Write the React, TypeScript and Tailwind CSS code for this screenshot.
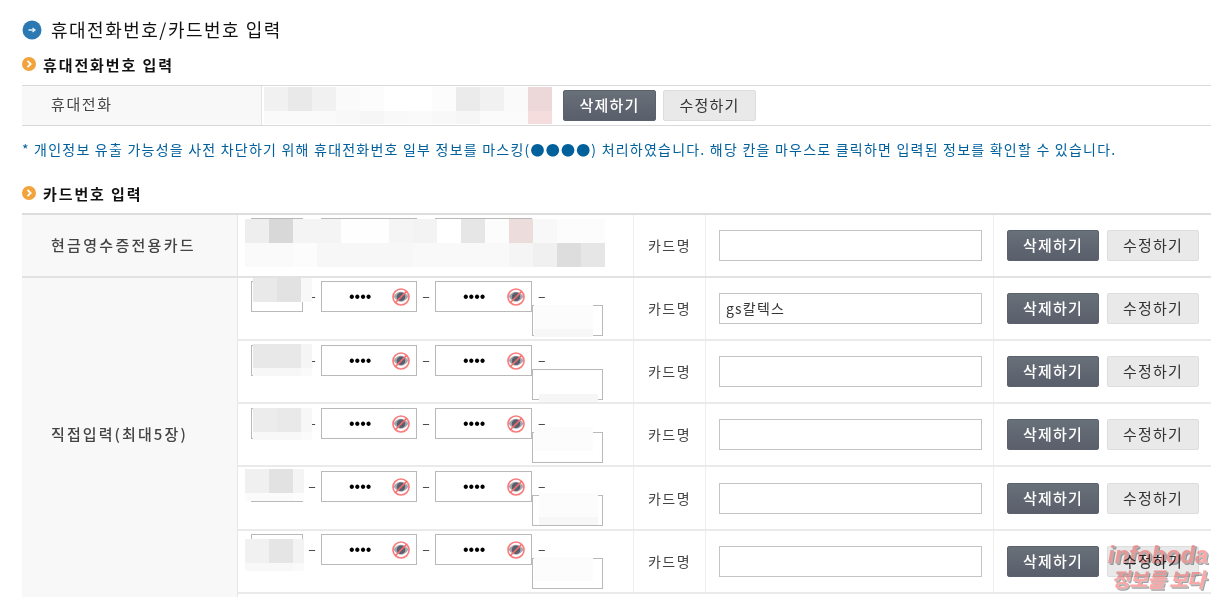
const FONT = "font-['Noto_Sans_CJK_KR','Noto_Sans',sans-serif]";

type Row = { height: string; top: string; value?: string; first: string[][]; last: string[][]; firstPos: string; lastPos: string };

function Mosaic({ rows, className }: { rows: string[][]; className: string }) {
  return (
    <div className={`pointer-events-none absolute flex flex-col overflow-hidden ${className}`}>
      {rows.map((cells, i) => (
        <div key={i} className="flex">
          {cells.map((c, j) => (
            <div key={j} className={`h-6 w-6 shrink-0 ${c}`} />
          ))}
        </div>
      ))}
    </div>
  );
}

function NoEye() {
  return (
    <svg width="18" height="18" viewBox="0 0 18 18" className="shrink-0">
      <path d="M1.500 8.500C4 5 6.500 3.800 9 3.800s5 1.200 7.500 4.700C14 12.500 11.500 13.700 9 13.700S4 12.500 1.500 8.500z" fill="#a5a7b0" />
      <circle cx="9" cy="8.800" r="4.300" fill="#5a5f6e" />
      <circle cx="9" cy="9" r="8" fill="none" stroke="#fb7c7c" strokeWidth="1.700" />
      <path d="M3.500 14.500L14.500 3.500" stroke="#f76a6a" strokeWidth="1.600" />
    </svg>
  );
}

function MaskedInput({ className }: { className: string }) {
  return (
    <div className={`flex h-[31px] items-center border border-[#b9b9b9] bg-white ${className}`}>
      <span className="ml-[27px] font-['Liberation_Sans',sans-serif] text-[16px] leading-none text-black">••••</span>
      <span className="ml-auto mr-[6px] flex"><NoEye /></span>
    </div>
  );
}

function Btn({ dark, label, wide }: { dark?: boolean; label: string; wide?: boolean }) {
  return (
    <button
      className={`h-[31px] ${wide ? "w-[93px]" : "w-[92px]"} rounded-[2px] border pb-[2px] text-[15px] leading-none tracking-[1.2px] ${
        dark
          ? "border-[#5c626d] bg-gradient-to-b from-[#687079] to-[#5a5f6b] font-medium text-white"
          : "border-[#dddddd] bg-[#e9e9e9] text-[#333333]"
      }`}
    >
      {label}
    </button>
  );
}

function Heading({ label }: { label: string }) {
  return (
    <div className="flex h-5 items-center">
      <svg width="14" height="14" viewBox="0 0 14 14" className="shrink-0 -translate-y-[1px]">
        <circle cx="7" cy="7" r="7" fill="#f2a33a" />
        <path d="M5.500 3.800L8.700 7L5.500 10.200" fill="none" stroke="#fff" strokeWidth="1.800" />
      </svg>
      <h3 className="ml-[7px] text-[15px] font-bold tracking-[1.9px] text-[#111111]">{label}</h3>
    </div>
  );
}

const rows: Row[] = [
  {
    height: "h-[63px]", top: "mt-[3px]", value: "gs칼텍스",
    first: [["bg-[#e9e9e9]", "bg-[#e2e2e2]", "bg-[#f8f8f8]"]],
    last: [["bg-[#fcfcfc]", "bg-[#fcfcfc]", "bg-[#fcfcfc]"], ["bg-[#f7f7f7]", "bg-[#f7f7f7]", "bg-[#f7f7f7]"]],
    firstPos: "left-[15px] top-0 w-[59px]", lastPos: "left-[296px] top-[27px] w-[59px] h-[32px]",
  },
  {
    height: "h-[63px]", top: "mt-[4px]",
    first: [["bg-[#e8e8e8]", "bg-[#e8e8e8]", "bg-[#f5f5f5]"], ["bg-[#f7f7f7]", "bg-[#f7f7f7]", "bg-[#fafafa]"]],
    last: [["bg-[#f6f6f6]", "bg-[#f6f6f6]", "bg-[#f6f6f6]"]],
    firstPos: "left-[15px] top-[3px] w-[59px] h-[32px]", lastPos: "left-[301px] top-[53px] w-[59px] h-2",
  },
  {
    height: "h-[63px]", top: "mt-[4px]",
    first: [["bg-[#ececec]", "bg-[#e9e9e9]", "bg-[#f7f7f7]"], ["bg-[#f8f8f8]", "bg-[#f8f8f8]", "bg-[#fbfbfb]"]],
    last: [["bg-[#fcfcfc]", "bg-[#fcfcfc]", "bg-[#fcfcfc]"]],
    firstPos: "left-[15px] top-[4px] w-[59px] h-[32px]", lastPos: "left-[296px] top-[23px] w-[59px]",
  },
  {
    height: "h-[64px]", top: "mt-[4px]",
    first: [["bg-[#f0f0f0]", "bg-[#e2e2e2]", "bg-[#f4f4f4]"], ["bg-[#fbfbfb]", "bg-[#fbfbfb]", "bg-[#fdfdfd]"]],
    last: [["bg-[#fcfcfc]", "bg-[#fcfcfc]", "bg-[#fcfcfc]"], ["bg-[#f7f7f7]", "bg-[#f7f7f7]", "bg-[#f7f7f7]"]],
    firstPos: "left-[7px] top-[2px] w-[59px] h-[32px]", lastPos: "left-[301px] top-[26px] w-[59px] h-[32px]",
  },
  {
    height: "h-[63px]", top: "mt-[3px]",
    first: [["bg-[#f1f1f1]", "bg-[#e5e5e5]", "bg-[#f3f3f3]"], ["bg-[#f8f8f8]", "bg-[#f8f8f8]", "bg-[#fafafa]"]],
    last: [["bg-[#fcfcfc]", "bg-[#fcfcfc]", "bg-[#fcfcfc]"]],
    firstPos: "left-[7px] top-[8px] w-[59px] h-[32px]", lastPos: "left-[296px] top-[26px] w-[59px]",
  },
];

function CardNameCells({ value }: { value?: string }) {
  return (
    <>
      <div className="flex items-center justify-center border-l border-[#eeeeee] text-[14px] tracking-[1.5px] text-[#444444]">카드명</div>
      <div className="flex items-center border-l border-[#eeeeee] pl-[13px]">
        <div className="flex h-[31px] w-[263px] items-center border border-[#c4c4c4] bg-white pl-[6px] text-[14px] tracking-[1.2px] text-[#333333]">
          {value}
        </div>
      </div>
      <div className="flex items-center gap-2 border-l border-[#eeeeee] pl-[13px]">
        <Btn dark label="삭제하기" />
        <Btn label="수정하기" />
      </div>
    </>
  );
}

export default function App() {
  return (
    <div className={`relative h-[597px] w-[1211px] overflow-hidden bg-white pl-[22px] ${FONT}`}>
      {/* page title */}
      <div className="flex h-[55px] items-center pt-[5px]">
        <svg width="20" height="20" viewBox="0 0 20 20" className="shrink-0">
          <circle cx="10" cy="10" r="9.500" fill="#2b78b3" />
          <path d="M6.500 10H13M10.500 8L13 10L10.500 12" fill="none" stroke="#dfeefa" strokeWidth="1.300" />
        </svg>
        <h2 className="ml-[9px] -translate-y-[1px] text-[18px] tracking-[1.5px] text-[#111111]">휴대전화번호/카드번호 입력</h2>
      </div>

      <Heading label="휴대전화번호 입력" />

      {/* phone table */}
      <div className="relative mt-[10px] flex h-[41px] border-y border-[#d9d9d9]">
        <div className="flex w-[240px] items-center border-r border-[#e4e4e4] bg-[#f8f8f8] pb-[2px] pl-[29px] text-[15px] tracking-[1.6px] text-[#444444]">휴대전화</div>
        <div className="flex items-center gap-[7px] pl-[301px]">
          <Btn dark wide label="삭제하기" />
          <Btn wide label="수정하기" />
        </div>
        <Mosaic
          className="left-[242px] top-[1px] h-[37px]"
          rows={[
            ["bg-[#f1f1f1]", "bg-[#e9e9e9]", "bg-[#f1f1f1]", "bg-[#fafafa]", "bg-[#fcfcfc]", "bg-white", "bg-white", "bg-[#fcfcfc]", "bg-[#ebebeb]", "bg-[#f1f1f1]", "bg-[#fafafa]", "bg-[#ecd8d8]"],
            ["bg-[#fafafa]", "bg-[#fafafa]", "bg-[#fafafa]", "bg-[#f8f8f8]", "bg-[#f6f6f6]", "bg-[#f9f9f9]", "bg-[#fafafa]", "bg-[#f8f8f8]", "bg-[#f6f6f6]", "bg-[#fbfbfb]", "bg-[#fbfbfb]", "bg-[#f5dddd]"],
          ]}
        />
      </div>

      <p className="mt-[13px] text-[14px] leading-[20px] tracking-[1.22px] text-[#00609c]">
        * 개인정보 유출 가능성을 사전 차단하기 위해 휴대전화번호 일부 정보를 마스킹(●●●●) 처리하였습니다. 해당 칸을 마우스로 클릭하면 입력된 정보를 확인할 수 있습니다.
      </p>

      <div className="mt-[25px]">
        <Heading label="카드번호 입력" />
      </div>

      {/* card table */}
      <div className="mt-[9px] border-t-2 border-[#dddddd]">
        <div className="relative grid h-[63px] grid-cols-[216px_395px_72px_288px_218px] border-b-2 border-[#e2e2e2]">
          <div className="flex items-center border-r border-[#e6e6e6] bg-[#f8f8f8] pl-[29px] text-[15px] font-medium tracking-[2.3px] text-[#444444]">현금영수증전용카드</div>
          <div className="relative">
            <div className="absolute left-[13px] top-[3px] h-[31px] w-[52px] border border-[#b9b9b9]" />
            <div className="absolute left-[83px] top-[3px] h-[31px] w-[96px] border border-[#b9b9b9]" />
            <div className="absolute left-[197px] top-[3px] h-[31px] w-[97px] border border-[#b9b9b9]" />
            <Mosaic
              className="left-[7px] top-[4px]"
              rows={[
                ["bg-[#eeeeee]", "bg-[#d8d8d8]", "bg-[#f4f4f4]", "bg-[#f4f4f4]", "bg-[#fefefe]", "bg-[#fefefe]", "bg-[#f5f5f5]", "bg-[#f3f3f3]", "bg-white", "bg-[#e6e6e6]", "bg-[#fcfcfc]", "bg-[#ecdcdc]", "bg-[#f8f8f8]", "bg-[#fcfcfc]", "bg-[#fcfcfc]"],
                ["bg-[#fafafa]", "bg-[#fafafa]", "bg-[#fcfcfc]", "bg-[#f7f7f7]", "bg-[#f7f7f7]", "bg-[#f7f7f7]", "bg-[#f7f7f7]", "bg-[#f9f9f9]", "bg-[#f9f9f9]", "bg-[#f9f9f9]", "bg-[#f9f9f9]", "bg-[#f5f5f5]", "bg-[#f0f0f0]", "bg-[#dddddd]", "bg-[#e6e6e6]"],
              ]}
            />
          </div>
          <CardNameCells />
        </div>

        <div className="flex">
          <div className="flex w-[216px] items-center border-r border-[#e6e6e6] bg-[#f8f8f8] pb-[20px] pl-[29px] text-[15px] font-medium tracking-[2.1px] text-[#444444]">직접입력(최대5장)</div>
          <div className="flex-1">
            {rows.map((r, i) => (
              <div key={i} className={`relative grid grid-cols-[395px_72px_288px_218px] border-b-2 border-[#eaeaea] ${r.height}`}>
                <div className="relative">
                  <div className={`flex items-center pl-[13px] ${r.top}`}>
                    <div className="h-[31px] w-[52px] border border-[#b9b9b9] bg-white" />
                    <span className="w-[18px] -translate-y-[1px] text-center text-[14px] text-[#333333]">–</span>
                    <MaskedInput className="w-[96px]" />
                    <span className="w-[18px] -translate-y-[1px] text-center text-[14px] text-[#333333]">–</span>
                    <MaskedInput className="w-[97px]" />
                    <span className="ml-[6px] -translate-y-[1px] text-[14px] text-[#333333]">–</span>
                  </div>
                  <div className="-mt-[7px] ml-[294px] h-[31px] w-[71px] border border-[#b9b9b9] bg-white" />
                  <Mosaic className={r.firstPos} rows={r.first} />
                  <Mosaic className={r.lastPos} rows={r.last} />
                </div>
                <CardNameCells value={r.value} />
              </div>
            ))}
            <div className="h-4" />
          </div>
        </div>
      </div>

      {/* watermark */}
      <div className="pointer-events-none absolute left-[1106px] top-[544px] flex w-[104px] flex-col items-center font-bold leading-none text-[#ff9c9c] opacity-90 mix-blend-multiply [text-shadow:1px_1px_0_#bbbbbb,2px_2px_0_#999999]">
        <span className="font-['Liberation_Sans',sans-serif] text-[23px] italic tracking-[0.4px]">infoboda</span>
        <span className="mt-[2px] text-[20px] italic tracking-[-0.5px]">정보를 보다</span>
      </div>
    </div>
  );
}
